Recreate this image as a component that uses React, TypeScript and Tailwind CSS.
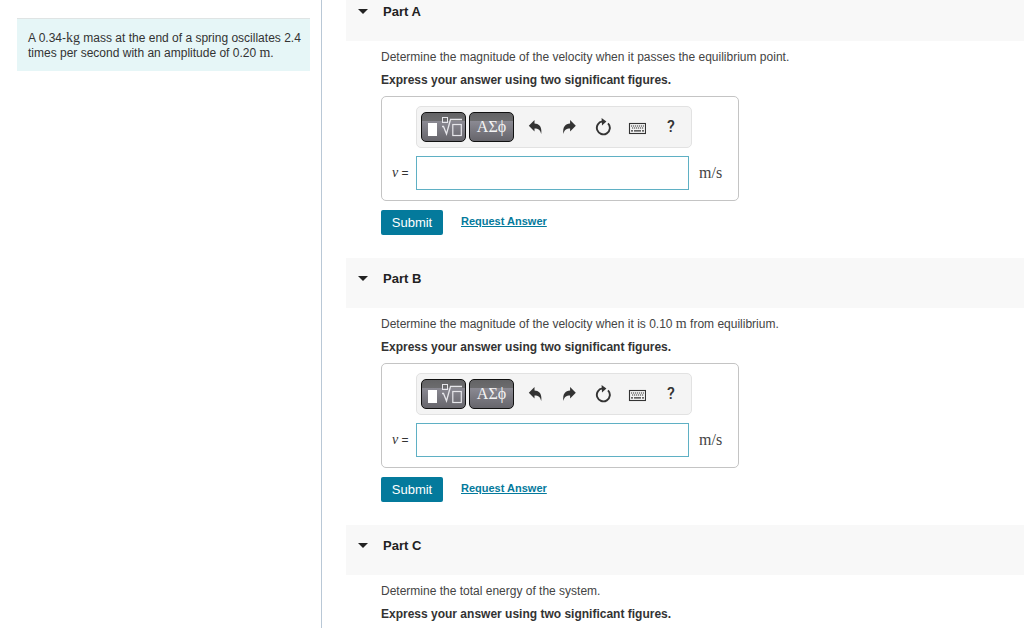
import React, { ReactNode } from "react";

const sans = "font-['Liberation_Sans',Arial,sans-serif]";
const serif = "font-['Liberation_Serif','Times_New_Roman',serif]";

function Unit({ children }: { children: ReactNode }) {
  return <span className={`${serif} text-[14px] leading-none`}>{children}</span>;
}

function TemplatesIcon() {
  return (
    <svg width="45" height="30" viewBox="0 0 45 30" fill="none" stroke="#e6e6ea" aria-hidden="true" className="shrink-0">
      <rect x="7" y="11" width="9" height="13" fill="#fff" stroke="none" />
      <rect x="21.5" y="5.5" width="5" height="5" />
      <path d="M21 14.5h1.5l3 7.5 4-14.5H41" strokeWidth="1.3" />
      <rect x="31.8" y="12.5" width="8.5" height="11" strokeWidth="1.2" />
    </svg>
  );
}

function UndoIcon() {
  return (
    <svg width="14" height="14" viewBox="0 0 14 14" fill="#333" aria-hidden="true">
      <path d="M.8 5.800 6.500 0v3.400C11.200 3.700 14.200 6.600 13.200 14 12.400 10 10.500 8.500 6.500 8.400v3.200z" />
    </svg>
  );
}

function RedoIcon() {
  return (
    <svg width="14" height="14" viewBox="0 0 14 14" fill="#333" aria-hidden="true">
      <path d="M13.800 5.800 8.100 0v3.400C3.400 3.700.4 6.600 1.400 14 2.200 10 4.100 8.500 8.100 8.400v3.200z" />
    </svg>
  );
}

function ResetIcon() {
  return (
    <svg width="18" height="18" viewBox="0 0 18 18" fill="none" aria-hidden="true">
      <path d="M14 5.300A6.500 6.500 0 1 1 8.500 3.400" stroke="#333" strokeWidth="1.900" />
      <path d="M7.600 0 12.400 3.600 8 7.400z" fill="#333" />
    </svg>
  );
}

function KeyboardIcon() {
  return (
    <svg width="18" height="16" viewBox="0 0 18 16" fill="none" stroke="#333" aria-hidden="true">
      <rect x="1.500" y="4.500" width="16" height="10" strokeWidth="1.100" />
      <path d="M3 7h13M4 9h12" strokeDasharray="1.200 .8" />
      <path d="M3 11.800h2M6 11.800h7M14 11.800h2" strokeWidth="1.200" />
    </svg>
  );
}

function ToolButton({ label, children }: { label: string; children: ReactNode }) {
  return (
    <button type="button" aria-label={label} className="flex h-[30px] w-[34px] items-center justify-center text-[#333]">
      {children}
    </button>
  );
}

const darkButton =
  "flex h-[30px] w-[45px] items-center justify-center overflow-hidden rounded-[5px] border border-[#111] bg-[linear-gradient(180deg,#636365_0%,#6c6c6e_29%,#8a8992_30%,#66656b_100%)] text-[#f4f4f4]";

function AnswerBox({ id }: { id: string }) {
  return (
    <div className="mt-2 w-[358px] rounded-[5px] border border-[#c4c4c4] pt-[9px] pb-[10px]">
      <div className="ml-[34px] flex h-[42px] w-[276px] items-center rounded-[5px] border border-[#e2e2e2] bg-[#f4f4f4] pl-1">
        <button type="button" aria-label="Templates" className={darkButton}>
          <TemplatesIcon />
        </button>
        <button type="button" aria-label="Symbols" className={`${darkButton} ${serif} mr-1 ml-[3px] text-[16px] leading-none`}>
          ΑΣϕ
        </button>
        <ToolButton label="Undo"><UndoIcon /></ToolButton>
        <ToolButton label="Redo"><RedoIcon /></ToolButton>
        <ToolButton label="Reset"><ResetIcon /></ToolButton>
        <ToolButton label="Keyboard shortcuts"><KeyboardIcon /></ToolButton>
        <ToolButton label="Help">
          <span className="font-[Roboto,sans-serif] text-[16px] leading-none font-medium">?</span>
        </ToolButton>
      </div>
      <div className="mt-2 flex h-[34px] items-center">
        <label htmlFor={id} className="w-[34px] pl-[10px] text-[12px] whitespace-nowrap text-[#333]">
          <span className={`${serif} text-[14px] italic`}>v</span> =
        </label>
        <input id={id} type="text" className="h-[34px] w-[273px] border border-[#5fb0c4] bg-white px-2 text-[13px] outline-none" />
        <span className={`${serif} ml-[10px] text-[16px] text-[#444]`}>m/s</span>
      </div>
    </div>
  );
}

function Part({ name, question, answer = true }: { name: string; question: ReactNode; answer?: boolean }) {
  const id = `answer-${name}`;
  return (
    <section>
      <header className="flex h-[50px] items-start bg-[#f8f8f8] pt-[13px]">
        <button type="button" className="flex h-4 items-center pl-3 text-[13px] leading-4 font-bold text-[#222]">
          <svg width="10" height="5" viewBox="0 0 10 5" fill="#222" aria-hidden="true" className="mr-[15px] mb-0.5">
            <path d="M0 0h10L5 5z" />
          </svg>
          Part {name}
        </button>
      </header>
      <div className="px-[35px] pt-2 pb-[23px] text-[12px] leading-4 text-[#444]">
        <p>{question}</p>
        <p className="mt-[7px] font-bold text-[#333]">Express your answer using two significant figures.</p>
        {answer && (
          <>
            <AnswerBox id={id} />
            <div className="mt-[9px] flex items-start gap-[18px]">
              <button type="button" className="h-[25px] w-[62px] rounded-[2px] bg-[#047a9c] text-[13px] text-white">
                Submit
              </button>
              <a href="#" className="text-[11px] leading-[23px] font-bold text-[#047a9c] underline">
                Request Answer
              </a>
            </div>
          </>
        )}
      </div>
    </section>
  );
}

export default function App() {
  return (
    <div className={`${sans} flex h-screen overflow-hidden bg-white`}>
      <aside className="w-[322px] shrink-0 border-r border-[#b9c8d6] pt-[18px] pr-[11px] pl-[17px]">
        <div className="border-t border-[#dfe4e4] bg-[#e6f6f7] pt-3 pr-1 pb-[10px] pl-[11px] text-[12px] leading-[15px] text-[#333]">
          <p>
            A 0.34-<Unit>kg</Unit> mass at the end of a spring oscillates 2.4
            <br />
            times per second with an amplitude of 0.20 <Unit>m</Unit>.
          </p>
        </div>
      </aside>
      <main className="min-w-0 flex-1 pl-6">
        <div className="-mt-[9px]">
          <Part name="A" question="Determine the magnitude of the velocity when it passes the equilibrium point." />
          <Part
            name="B"
            question={
              <>
                Determine the magnitude of the velocity when it is 0.10 <Unit>m</Unit> from equilibrium.
              </>
            }
          />
          <Part name="C" question="Determine the total energy of the system." answer={false} />
        </div>
      </main>
    </div>
  );
}
